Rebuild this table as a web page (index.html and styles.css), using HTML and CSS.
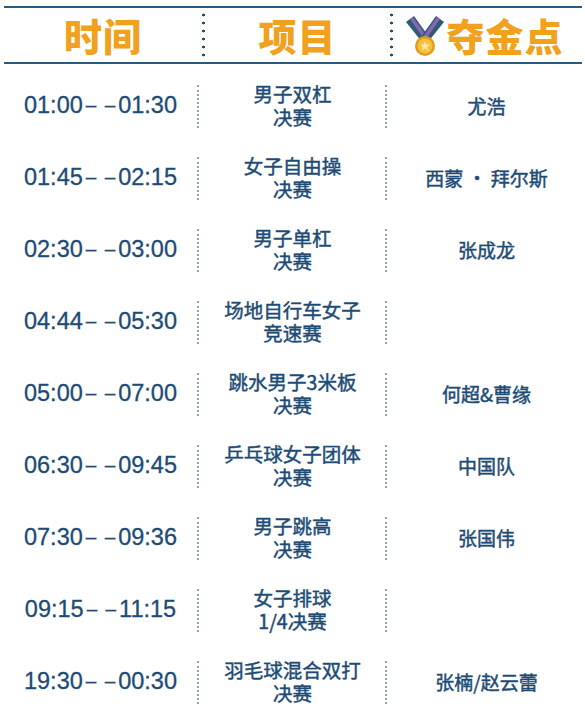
FILE: index.html
```html
<!DOCTYPE html>
<html lang="zh">
<head>
<meta charset="utf-8">
<link rel="stylesheet" href="styles.css">
</head>
<body>
<div class="page">
  <div class="header">
    <div class="h-cell">时间</div>
    <span class="h-sep"></span>
    <div class="h-cell">项目</div>
    <span class="h-sep"></span>
    <div class="h-cell h-gold">
      <svg class="medal" width="40" height="42" viewBox="0 0 40 42">
        <polygon points="1,7 9,1 24,22 17,27" fill="#2c5d70"/>
        <polygon points="5,4 8,2 22,22 19,24" fill="#8a63b8"/>
        <polygon points="39,7 31,1 16,22 23,27" fill="#2c5d70"/>
        <polygon points="35,4 32,2 18,22 21,24" fill="#8a63b8"/>
        <circle cx="20" cy="31" r="10" fill="#e39b19"/>
        <circle cx="20" cy="31" r="7.5" fill="#f6c13c"/>
        <polygon points="20,26 21.5,29.6 25,29.8 22.3,32 23.2,35.5 20,33.5 16.8,35.5 17.7,32 15,29.8 18.5,29.6" fill="#fde7a0"/>
      </svg>
      <span>夺金点</span>
    </div>
  </div>

  <div class="rows">
    <div class="row"><div class="time">01:00<span class="dash">– –</span>01:30</div><span class="sep"></span><div class="event"><span class="ln">男子双杠</span><span class="ln">决赛</span></div><span class="sep"></span><div class="name">尤浩</div></div>
    <div class="row"><div class="time">01:45<span class="dash">– –</span>02:15</div><span class="sep"></span><div class="event"><span class="ln">女子自由操</span><span class="ln">决赛</span></div><span class="sep"></span><div class="name">西蒙 · 拜尔斯</div></div>
    <div class="row"><div class="time">02:30<span class="dash">– –</span>03:00</div><span class="sep"></span><div class="event"><span class="ln">男子单杠</span><span class="ln">决赛</span></div><span class="sep"></span><div class="name">张成龙</div></div>
    <div class="row"><div class="time">04:44<span class="dash">– –</span>05:30</div><span class="sep"></span><div class="event"><span class="ln">场地自行车女子</span><span class="ln">竞速赛</span></div><span class="sep"></span><div class="name"></div></div>
    <div class="row"><div class="time">05:00<span class="dash">– –</span>07:00</div><span class="sep"></span><div class="event"><span class="ln">跳水男子3米板</span><span class="ln">决赛</span></div><span class="sep"></span><div class="name">何超&amp;曹缘</div></div>
    <div class="row"><div class="time">06:30<span class="dash">– –</span>09:45</div><span class="sep"></span><div class="event"><span class="ln">乒乓球女子团体</span><span class="ln">决赛</span></div><span class="sep"></span><div class="name">中国队</div></div>
    <div class="row"><div class="time">07:30<span class="dash">– –</span>09:36</div><span class="sep"></span><div class="event"><span class="ln">男子跳高</span><span class="ln">决赛</span></div><span class="sep"></span><div class="name">张国伟</div></div>
    <div class="row"><div class="time">09:15<span class="dash">– –</span>11:15</div><span class="sep"></span><div class="event"><span class="ln">女子排球</span><span class="ln">1/4决赛</span></div><span class="sep"></span><div class="name"></div></div>
    <div class="row"><div class="time">19:30<span class="dash">– –</span>00:30</div><span class="sep"></span><div class="event"><span class="ln">羽毛球混合双打</span><span class="ln">决赛</span></div><span class="sep"></span><div class="name">张楠/赵云蕾</div></div>
  </div>
</div>
</body>
</html>
```

FILE: styles.css
```css
html, body {
  margin: 0;
  padding: 0;
  background: #ffffff;
}

.page {
  width: 585px;
  height: 707px;
  overflow: hidden;
  padding-top: 6px;
  box-sizing: border-box;
  font-family: "Noto Sans CJK SC", "Liberation Sans", sans-serif;
  color: #1d4b75;
}

.header {
  display: grid;
  grid-template-columns: 198px 3px 185px 3px 1fr;
  align-items: center;
  height: 54px;
  margin: 0 3px 0 4px;
  border-top: 2px solid #2d5a78;
  border-bottom: 2px solid #2d5a78;
}

.h-cell {
  display: flex;
  justify-content: center;
  align-items: center;
  font-family: "Noto Sans CJK SC", sans-serif;
  font-weight: 900;
  font-size: 38px;
  line-height: 1;
  color: #f0a11e;
  letter-spacing: 1px;
}

.h-gold {
  gap: 1px;
  padding-right: 6px;
}

.medal {
  display: block;
  margin-top: 2px;
}

.h-sep {
  height: 48px;
  width: 3px;
  background-image: radial-gradient(circle, #2b4a66 1.2px, transparent 1.7px);
  background-size: 3px 8px;
  background-repeat: repeat-y;
}

.rows {
  padding-top: 5px;
}

.row {
  display: grid;
  grid-template-columns: 197px 3px 185px 3px 1fr;
  align-items: center;
  height: 72px;
}

.time {
  font-family: "Liberation Sans", Arial, sans-serif;
  font-size: 23.5px;
  text-align: center;
  padding-left: 4px;
  white-space: nowrap;
  color: #1d4b75;
  -webkit-text-stroke: 0.3px #1d4b75;
}

.dash {
  font-size: 19px;
  margin: 0 3px;
  word-spacing: 3px;
  vertical-align: 2px;
}

.sep {
  height: 43px;
  width: 2px;
  margin-top: 2px;
  border-left: 2px dotted #8fa3b5;
  box-sizing: border-box;
}

.event {
  display: flex;
  flex-direction: column;
  align-items: center;
  font-size: 19.5px;
  color: #1d4b75;
  -webkit-text-stroke: 0.45px #1d4b75;
}

.ln {
  display: block;
  height: 23px;
  line-height: 23px;
  white-space: nowrap;
}

.name {
  font-size: 19px;
  text-align: center;
  color: #1d4b75;
  white-space: nowrap;
  -webkit-text-stroke: 0.45px #1d4b75;
}
```
